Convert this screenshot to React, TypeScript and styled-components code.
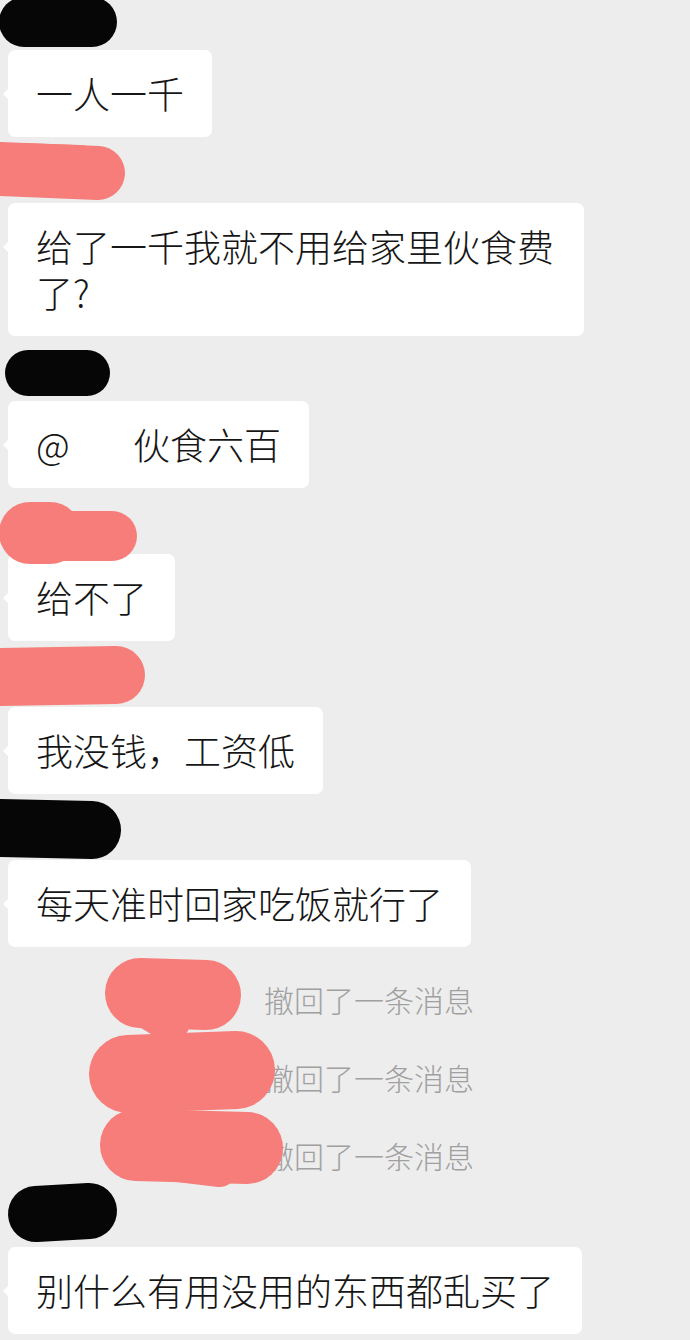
import styled, { createGlobalStyle } from 'styled-components';

type Stroke = { x1: number; y1: number; x2: number; y2: number; w: number };
type Scribble = { color: string; strokes: Stroke[] };

const BLACK = '#060606';
const PINK = '#f67d7a';

type Message = {
  head: number;
  scribble: Scribble;
  text: React.ReactNode;
};

const GlobalStyle = createGlobalStyle`
  html, body {
    margin: 0;
    padding: 0;
    background: #ededed;
  }
  #root {
    height: 1340px;
    overflow: hidden;
  }
`;

const Page = styled.div`
  box-sizing: border-box;
  width: 690px;
  height: 1340px;
  padding: 0 0 0 8px;
  background: #ededed;
  font-family: 'Noto Sans CJK SC', 'Noto Sans', sans-serif;
  font-weight: 300;
  color: #161616;
`;

const MessageBlock = styled.div`
  display: flex;
  flex-direction: column;
  align-items: flex-start;
`;

const NameRow = styled.div<{ $h: number }>`
  position: relative;
  width: 100%;
  height: ${({ $h }) => $h}px;
  z-index: 2;
`;

const Redaction = styled.svg`
  position: absolute;
  left: -8px;
  top: 0;
  overflow: visible;
`;

const Bubble = styled.div`
  position: relative;
  box-sizing: border-box;
  max-width: 576px;
  padding: 20px 28px 21px;
  border-radius: 7px;
  background: #ffffff;
  font-size: 37px;
  line-height: 46px;

  &::before {
    content: '';
    position: absolute;
    left: -5px;
    top: 39px;
    border-top: 5px solid transparent;
    border-bottom: 5px solid transparent;
    border-right: 5px solid #ffffff;
  }
`;

const Mention = styled.span`
  display: inline-block;
  width: 97px;
`;

const SystemList = styled.div`
  display: flex;
  flex-direction: column;
  padding-top: 13px;
`;

const SystemRow = styled.div`
  position: relative;
  display: flex;
  justify-content: flex-end;
  align-items: center;
  width: 466px;
  height: 78px;
  font-size: 30px;
  color: #a0a0a0;
`;

function Blot({ scribble, h }: { scribble: Scribble; h: number }) {
  return (
    <Redaction width={690} height={h} viewBox={`0 0 690 ${h}`}>
      {scribble.strokes.map((s, i) => (
        <line
          key={i}
          x1={s.x1}
          y1={s.y1}
          x2={s.x2}
          y2={s.y2}
          stroke={scribble.color}
          strokeWidth={s.w}
          strokeLinecap="round"
        />
      ))}
    </Redaction>
  );
}

const messages: Message[] = [
  {
    head: 50,
    scribble: { color: BLACK, strokes: [{ x1: 24, y1: 22, x2: 92, y2: 22, w: 50 }] },
    text: '一人一千',
  },
  {
    head: 66,
    scribble: {
      color: PINK,
      strokes: [
        { x1: 0, y1: 32, x2: 98, y2: 36, w: 54 },
        { x1: 20, y1: 28, x2: 80, y2: 30, w: 44 },
      ],
    },
    text: '给了一千我就不用给家里伙食费了?',
  },
  {
    head: 65,
    scribble: { color: BLACK, strokes: [{ x1: 28, y1: 37, x2: 87, y2: 37, w: 46 }] },
    text: (
      <>
        <Mention>@</Mention>伙食六百
      </>
    ),
  },
  {
    head: 66,
    scribble: {
      color: PINK,
      strokes: [
        { x1: 30, y1: 45, x2: 50, y2: 45, w: 62 },
        { x1: 60, y1: 48, x2: 112, y2: 48, w: 50 },
      ],
    },
    text: '给不了',
  },
  {
    head: 66,
    scribble: { color: PINK, strokes: [{ x1: 0, y1: 36, x2: 116, y2: 34, w: 58 }] },
    text: '我没钱，工资低',
  },
  {
    head: 66,
    scribble: { color: BLACK, strokes: [{ x1: 0, y1: 34, x2: 92, y2: 36, w: 58 }] },
    text: '每天准时回家吃饭就行了',
  },
];

const recalls: { text: string; scribble: Scribble }[] = [
  {
    text: '’ 撤回了一条消息',
    scribble: {
      color: PINK,
      strokes: [
        { x1: 140, y1: 33, x2: 206, y2: 35, w: 70 },
        { x1: 150, y1: 50, x2: 170, y2: 62, w: 40 },
      ],
    },
  },
  {
    text: '撤回了一条消息',
    scribble: {
      color: PINK,
      strokes: [{ x1: 128, y1: 36, x2: 236, y2: 32, w: 78 }],
    },
  },
  {
    text: '撤回了一条消息',
    scribble: {
      color: PINK,
      strokes: [
        { x1: 136, y1: 29, x2: 247, y2: 32, w: 72 },
        { x1: 170, y1: 48, x2: 220, y2: 54, w: 34 },
      ],
    },
  },
];

const last: Message = {
  head: 53,
  scribble: { color: BLACK, strokes: [{ x1: 36, y1: 20, x2: 89, y2: 17, w: 56 }] },
  text: '别什么有用没用的东西都乱买了',
};

function ChatMessage({ message }: { message: Message }) {
  return (
    <MessageBlock>
      <NameRow $h={message.head}>
        <Blot scribble={message.scribble} h={message.head} />
      </NameRow>
      <Bubble>{message.text}</Bubble>
    </MessageBlock>
  );
}

export default function App() {
  return (
    <>
      <GlobalStyle />
      <Page>
        {messages.map((m, i) => (
          <ChatMessage key={i} message={m} />
        ))}
        <SystemList>
          {recalls.map((r, i) => (
            <SystemRow key={i}>
              {r.text}
              <Blot scribble={r.scribble} h={78} />
            </SystemRow>
          ))}
        </SystemList>
        <ChatMessage message={last} />
      </Page>
    </>
  );
}
